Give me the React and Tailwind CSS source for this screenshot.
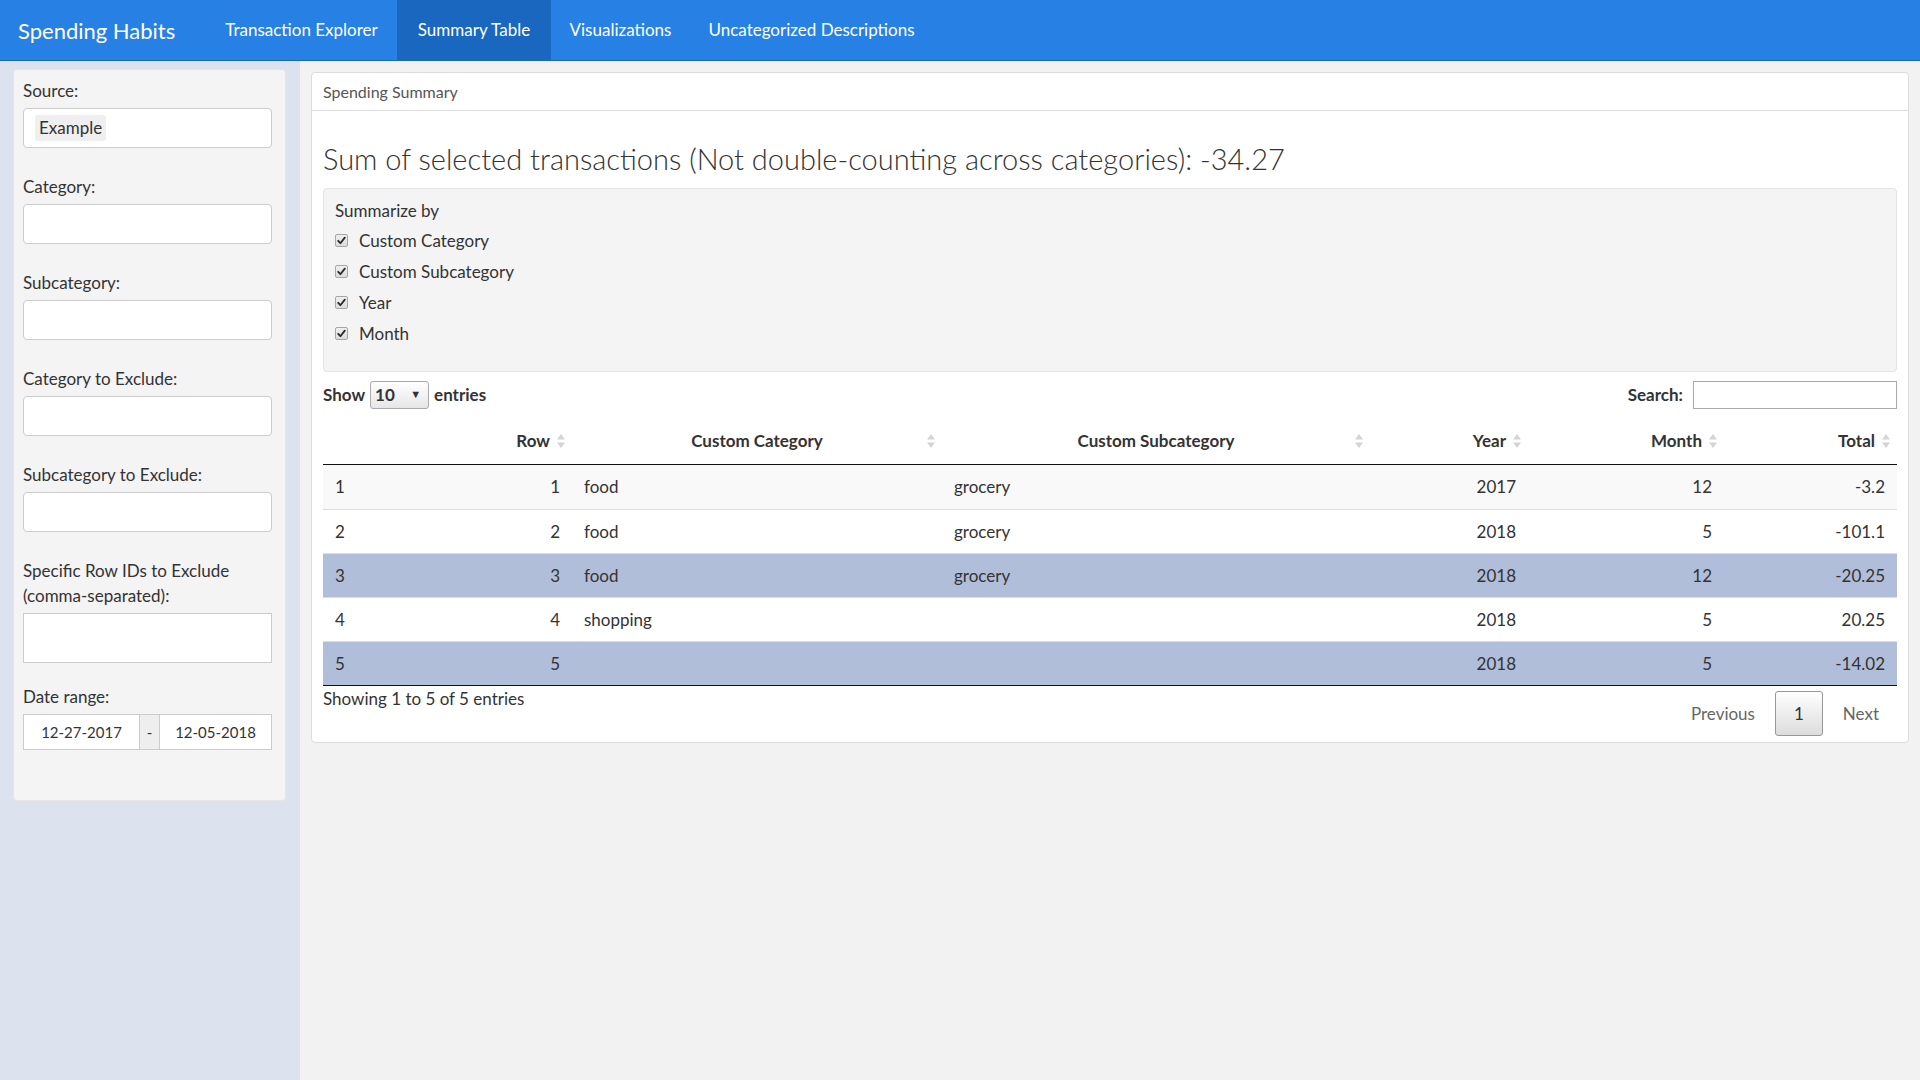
import React from "react";

const SortIcon = () => (
  <svg width="8" height="16" viewBox="0 0 8 16" className="absolute right-[7px] top-[15px]">
    <path d="M4 1 L8 6.5 H0 Z" fill="#d4d4d4" />
    <path d="M0 9.5 H8 L4 15 Z" fill="#d4d4d4" />
  </svg>
);

const Check = () => (
  <span className="w-[13px] h-[13px] rounded-[2px] border border-[#a6a6a6] bg-gradient-to-b from-[#f0f0f0] to-[#dcdcdc] flex items-center justify-center">
    <svg width="9" height="9" viewBox="0 0 9 9">
      <path d="M1.2 4.8 L3.4 7.2 L7.8 1.6" stroke="#2a2a2a" strokeWidth="1.8" fill="none" strokeLinecap="round" strokeLinejoin="round" />
    </svg>
  </span>
);

const rows = [
  { i: 1, row: 1, cat: "food", sub: "grocery", year: 2017, month: 12, total: "-3.2", bg: "odd" },
  { i: 2, row: 2, cat: "food", sub: "grocery", year: 2018, month: 5, total: "-101.1", bg: "even" },
  { i: 3, row: 3, cat: "food", sub: "grocery", year: 2018, month: 12, total: "-20.25", bg: "sel" },
  { i: 4, row: 4, cat: "shopping", sub: "", year: 2018, month: 5, total: "20.25", bg: "even" },
  { i: 5, row: 5, cat: "", sub: "", year: 2018, month: 5, total: "-14.02", bg: "sel" },
];

const bgClass = {
  odd: "bg-[#f9f9f9]",
  even: "bg-white",
  sel: "bg-[#b0bed9]",
};

const Field = ({ label, children, mb = "mb-[26px]" }) => (
  <div className={mb}>
    <div className="text-[17px] leading-[25px] text-[#333] mb-[5px]">{label}</div>
    {children}
  </div>
);

const SelBox = ({ children }) => (
  <div className="h-[40px] w-[249px] bg-white border border-[#cccccc] rounded-[4px] flex items-center px-[12px]">
    {children}
  </div>
);

export default function App() {
  return (
    <div className="w-[1920px] h-[1080px] flex flex-col font-['Lato',sans-serif] text-[#333] overflow-hidden">
      <nav className="h-[61px] shrink-0 bg-[#2780e3] border-b border-[#1967be] flex items-stretch text-white">
        <div className="w-[206px] pl-[18px] flex items-center text-[22px]">Spending Habits</div>
        <div className="w-[191px] flex items-center justify-center text-[17px]">Transaction Explorer</div>
        <div className="w-[154px] flex items-center justify-center text-[17px] bg-[#1967be]">Summary Table</div>
        <div className="w-[139px] flex items-center justify-center text-[17px]">Visualizations</div>
        <div className="w-[243px] flex items-center justify-center text-[17px]">Uncategorized Descriptions</div>
      </nav>

      <div className="flex flex-1">
        <aside className="w-[300px] shrink-0 bg-[#dde3ee] pt-[8px] pl-[13px]">
          <div className="w-[273px] h-[732px] bg-[#f4f4f4] border border-[#e6e6e6] rounded-[4px] pt-[8px] pl-[9px]">
            <Field label="Source:">
              <SelBox>
                <span className="bg-[#efefef] rounded-[3px] px-[4px] h-[26px] flex items-center text-[17px] -ml-[1px]">Example</span>
              </SelBox>
            </Field>
            <Field label="Category:">
              <SelBox />
            </Field>
            <Field label="Subcategory:">
              <SelBox />
            </Field>
            <Field label="Category to Exclude:">
              <SelBox />
            </Field>
            <Field label="Subcategory to Exclude:">
              <SelBox />
            </Field>
            <Field label={<>Specific Row IDs to Exclude<br />(comma-separated):</>} mb="mb-[21px]">
              <div className="h-[50px] w-[249px] bg-white border border-[#cccccc]" />
            </Field>
            <Field label="Date range:">
              <div className="flex h-[36px] w-[249px] border border-[#cccccc] bg-white text-[15px]">
                <div className="w-[115px] flex items-center justify-center">12-27-2017</div>
                <div className="w-[21px] bg-[#eeeeee] border-x border-[#cccccc] flex items-center justify-center">-</div>
                <div className="flex-1 flex items-center justify-center">12-05-2018</div>
              </div>
            </Field>
          </div>
        </aside>

        <main className="flex-1 bg-[#f2f2f2] pt-[11px] pl-[11px] pr-[11px]">
          <div className="h-[671px] bg-white border border-[#dddddd] rounded-[4px]">
            <div className="h-[38px] border-b border-[#dddddd] flex items-center pl-[11px] text-[16px] text-[#555]">
              Spending Summary
            </div>
            <div className="px-[11px]">
              <h3 className="mt-[31px] mb-[12px] text-[29px] leading-[34px] font-light text-[#333]">
                Sum of selected transactions (Not double-counting across categories): -34.27
              </h3>

              <div className="h-[184px] bg-[#f4f4f4] border border-[#e3e3e3] rounded-[4px] pt-[9px] pl-[11px]">
                <div className="text-[17px] leading-[25px]">Summarize by</div>
                <div className="mt-[2px]">
                  {["Custom Category", "Custom Subcategory", "Year", "Month"].map((t) => (
                    <div key={t} className="h-[31px] flex items-center gap-[11px] text-[17px]">
                      <Check />
                      <span>{t}</span>
                    </div>
                  ))}
                </div>
              </div>

              <div className="mt-[8px] h-[29px] flex items-center justify-between">
                <div className="flex items-center text-[17px] font-bold">
                  <span>Show</span>
                  <div className="ml-[5px] w-[59px] h-[28px] border border-[#aaaaaa] rounded-[3px] bg-gradient-to-b from-white to-[#e6e6e6] flex items-center justify-between pl-[4px] pr-[7px]">
                    <span>10</span>
                    <span className="text-[11px]">▼</span>
                  </div>
                  <span className="ml-[5px]">entries</span>
                </div>
                <div className="flex items-center text-[17px] font-bold">
                  <span>Search:</span>
                  <div className="ml-[10px] w-[204px] h-[28px] border border-[#aaaaaa] bg-white" />
                </div>
              </div>

              <div className="mt-[9px]">
                <div className="h-[47px] flex border-b border-[#111111] font-bold text-[17px]">
                  <div className="w-[97px] relative" />
                  <div className="w-[152px] relative flex items-center justify-end pr-[22px]">
                    Row<SortIcon />
                  </div>
                  <div className="w-[370px] relative flex items-center justify-center">
                    Custom Category<SortIcon />
                  </div>
                  <div className="w-[428px] relative flex items-center justify-center">
                    Custom Subcategory<SortIcon />
                  </div>
                  <div className="w-[158px] relative flex items-center justify-end pr-[22px]">
                    Year<SortIcon />
                  </div>
                  <div className="w-[196px] relative flex items-center justify-end pr-[22px]">
                    Month<SortIcon />
                  </div>
                  <div className="w-[173px] relative flex items-center justify-end pr-[22px]">
                    Total<SortIcon />
                  </div>
                </div>
                <div className="border-b border-[#111111]">
                  {rows.map((r, idx) => (
                    <div
                      key={r.i}
                      className={`h-[44px] flex items-center text-[17px] ${bgClass[r.bg]} ${idx === 0 ? "" : "border-t border-[#dddddd]"}`}
                    >
                      <div className="w-[97px] pl-[12px]">{r.i}</div>
                      <div className="w-[152px] pr-[12px] text-right">{r.row}</div>
                      <div className="w-[370px] pl-[12px]">{r.cat}</div>
                      <div className="w-[428px] pl-[12px]">{r.sub}</div>
                      <div className="w-[158px] pr-[12px] text-right">{r.year}</div>
                      <div className="w-[196px] pr-[12px] text-right">{r.month}</div>
                      <div className="w-[173px] pr-[12px] text-right">{r.total}</div>
                    </div>
                  ))}
                </div>
                <div className="flex justify-between">
                  <div className="text-[17px] leading-[26px]">Showing 1 to 5 of 5 entries</div>
                  <div className="mt-[5px] flex items-center text-[17px] text-[#666]">
                    <span className="px-[18px] h-[45px] flex items-center">Previous</span>
                    <span className="ml-[2px] px-[18px] h-[45px] flex items-center border border-[#979797] rounded-[3px] bg-gradient-to-b from-white to-[#dcdcdc] text-[#333]">1</span>
                    <span className="ml-[2px] px-[18px] h-[45px] flex items-center">Next</span>
                  </div>
                </div>
              </div>
            </div>
          </div>
        </main>
      </div>
    </div>
  );
}
